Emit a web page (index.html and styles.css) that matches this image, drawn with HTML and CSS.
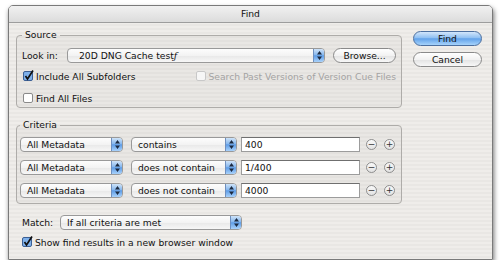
FILE: index.html
```html
<!DOCTYPE html>
<html lang="en">
<head>
    <meta charset="UTF-8">
    <title>Find</title>
    <link rel="stylesheet" href="styles.css">
</head>
<body>

    <div class="window">
        <div class="titlebar">Find</div>

        <div class="dialog">
            <div class="main">

                <fieldset class="group source">
                    <legend>Source</legend>
                    <div class="row">
                        <span class="label lookin-label">Look in:</span>
                        <div class="popup lookin-popup">
                            <span class="popup-value">20D DNG Cache test<i>ƒ</i></span>
                            <span class="popup-arrows">
                                <svg width="9" height="13" viewBox="0 0 9 13"><path d="M2 5.5h5L4.5 2z M2 7.5h5L4.5 11z" fill="#1c2a40"/></svg>
                            </span>
                        </div>
                        <button class="btn browse">Browse...</button>
                    </div>
                    <div class="row check-row">
                        <label class="check">
                            <svg class="box" width="12" height="12" viewBox="0 0 12 12"><rect x="1.5" y="1.5" width="9" height="9" rx="1.5" fill="#7eb0ea" stroke="#3b5f94"/><path d="M3.5 6l2 3L11 0.5" fill="none" stroke="#111" stroke-width="1.7"/></svg>
                            Include All Subfolders
                        </label>
                        <label class="check disabled">
                            <svg class="box" width="12" height="12" viewBox="0 0 12 12"><rect x="1.5" y="1.5" width="9" height="9" rx="1.5" fill="#f6f6f6" stroke="#c8c8c8"/></svg>
                            Search Past Versions of Version Cue Files
                        </label>
                    </div>
                    <div class="row check-row last">
                        <label class="check">
                            <svg class="box" width="12" height="12" viewBox="0 0 12 12"><rect x="1.5" y="1.5" width="9" height="9" rx="1.5" fill="#fff" stroke="#8a8a8a"/></svg>
                            Find All Files
                        </label>
                    </div>
                </fieldset>

                <fieldset class="group criteria">
                    <legend>Criteria</legend>
                    <div class="crit-row">
                        <div class="popup field-popup">
                            <span class="popup-value">All Metadata</span>
                            <span class="popup-arrows"><svg width="9" height="13" viewBox="0 0 9 13"><path d="M2 5.5h5L4.5 2z M2 7.5h5L4.5 11z" fill="#1c2a40"/></svg></span>
                        </div>
                        <div class="popup op-popup">
                            <span class="popup-value">contains</span>
                            <span class="popup-arrows"><svg width="9" height="13" viewBox="0 0 9 13"><path d="M2 5.5h5L4.5 2z M2 7.5h5L4.5 11z" fill="#1c2a40"/></svg></span>
                        </div>
                        <div class="text-field">400</div>
                        <span class="round-btn">&minus;</span>
                        <span class="round-btn">+</span>
                    </div>
                    <div class="crit-row">
                        <div class="popup field-popup">
                            <span class="popup-value">All Metadata</span>
                            <span class="popup-arrows"><svg width="9" height="13" viewBox="0 0 9 13"><path d="M2 5.5h5L4.5 2z M2 7.5h5L4.5 11z" fill="#1c2a40"/></svg></span>
                        </div>
                        <div class="popup op-popup">
                            <span class="popup-value">does not contain</span>
                            <span class="popup-arrows"><svg width="9" height="13" viewBox="0 0 9 13"><path d="M2 5.5h5L4.5 2z M2 7.5h5L4.5 11z" fill="#1c2a40"/></svg></span>
                        </div>
                        <div class="text-field">1/400</div>
                        <span class="round-btn">&minus;</span>
                        <span class="round-btn">+</span>
                    </div>
                    <div class="crit-row">
                        <div class="popup field-popup">
                            <span class="popup-value">All Metadata</span>
                            <span class="popup-arrows"><svg width="9" height="13" viewBox="0 0 9 13"><path d="M2 5.5h5L4.5 2z M2 7.5h5L4.5 11z" fill="#1c2a40"/></svg></span>
                        </div>
                        <div class="popup op-popup">
                            <span class="popup-value">does not contain</span>
                            <span class="popup-arrows"><svg width="9" height="13" viewBox="0 0 9 13"><path d="M2 5.5h5L4.5 2z M2 7.5h5L4.5 11z" fill="#1c2a40"/></svg></span>
                        </div>
                        <div class="text-field">4000</div>
                        <span class="round-btn">&minus;</span>
                        <span class="round-btn">+</span>
                    </div>
                </fieldset>

                <div class="row match">
                    <span class="label match-label">Match:</span>
                    <div class="popup match-popup">
                        <span class="popup-value">If all criteria are met</span>
                        <span class="popup-arrows"><svg width="9" height="13" viewBox="0 0 9 13"><path d="M2 5.5h5L4.5 2z M2 7.5h5L4.5 11z" fill="#1c2a40"/></svg></span>
                    </div>
                </div>
                <div class="row check-row show-row">
                    <label class="check">
                        <svg class="box" width="12" height="12" viewBox="0 0 12 12"><rect x="1.5" y="1.5" width="9" height="9" rx="1.5" fill="#7eb0ea" stroke="#3b5f94"/><path d="M3.5 6l2 3L11 0.5" fill="none" stroke="#111" stroke-width="1.7"/></svg>
                        Show find results in a new browser window
                    </label>
                </div>
            </div>

            <div class="actions">
                <button class="btn default">Find</button>
                <button class="btn">Cancel</button>
            </div>
        </div>
    </div>

</body>
</html>
```

FILE: styles.css
```css
body {
    margin: 0;
    padding: 0;
    background-color: #fff;
    font-family: "DejaVu Sans", sans-serif;
    font-size: 9.2px;
    color: #111;
}
.window {
    box-sizing: border-box;
    width: 485px;
    height: 255px;
    margin: 5px 0 0 8px;
    border: 1px solid #7a7a7a;
    border-radius: 5px 5px 0 0;
    background: repeating-linear-gradient(#efedea 0, #efedea 2px, #e9e7e4 2px, #e9e7e4 4px);
    box-shadow: 1px 3px 5px rgba(0, 0, 0, 0.55);
    overflow: hidden;
}
.titlebar {
    height: 16px;
    line-height: 16px;
    text-align: center;
    background: linear-gradient(#f1f1f1, #dcdcdc);
    border-bottom: 1px solid #9d9d9d;
}
.dialog {
    display: flex;
    padding-left: 7px;
}
.main {
    width: 386px;
    padding-top: 6px;
}
.group {
    margin: 0;
    min-width: 0;
    border: 1px solid #aeaca9;
    border-radius: 4px;
    background-color: rgba(0, 0, 0, 0.025);
}
.group legend {
    padding: 0 3px;
    line-height: 12px;
}
.source {
    padding: 7px 5px 3px 5px;
}
.criteria {
    margin-top: 11px;
    padding: 6px 5px 5px 3px;
}
.row {
    display: flex;
    align-items: center;
}
.label {
    white-space: nowrap;
}
.lookin-label {
    width: 45px;
}
.match-label {
    width: 38px;
}
.popup {
    box-sizing: border-box;
    display: flex;
    height: 15px;
    border: 1px solid #999;
    border-radius: 4px;
    background: linear-gradient(#fdfdfd, #f3f3f3 50%, #e9e9e9 55%, #f7f7f7);
    overflow: hidden;
}
.popup-value {
    flex: 1;
    padding-left: 6px;
    line-height: 13px;
    white-space: nowrap;
}
.popup-value i {
    font-family: "DejaVu Serif", serif;
}
.popup-arrows {
    width: 10px;
    display: flex;
    align-items: center;
    justify-content: center;
    border-left: 1px solid #6e8fbf;
    background: linear-gradient(#cfe3f8, #86b7ee 45%, #5e9ce6 52%, #a9d2fb);
}
.lookin-popup {
    width: 258px;
}
.lookin-popup .popup-value {
    padding-left: 11px;
}
.field-popup {
    width: 103px;
}
.op-popup {
    width: 106px;
    margin-left: 8px;
}
.match-popup {
    width: 182px;
}
.btn {
    box-sizing: border-box;
    height: 15px;
    padding: 0;
    font-family: "DejaVu Sans", sans-serif;
    font-size: 9.2px;
    color: #111;
    border: 1px solid #8a8a8a;
    border-radius: 8px;
    background: linear-gradient(#ffffff, #f2f2f2 50%, #e4e4e4 55%, #f8f8f8);
}
.browse {
    width: 63px;
    margin-left: 8px;
}
.check-row {
    height: 12px;
    margin-top: 7px;
}
.check-row.last {
    margin-top: 10px;
}
.check {
    display: flex;
    align-items: center;
    white-space: nowrap;
}
.check .box {
    margin-right: 2px;
}
.check.disabled {
    margin-left: auto;
    color: #a3a3a3;
}
.crit-row {
    display: flex;
    align-items: center;
    height: 15px;
}
.crit-row + .crit-row {
    margin-top: 8px;
}
.text-field {
    box-sizing: border-box;
    width: 119px;
    height: 15px;
    margin-left: 4px;
    padding-left: 3px;
    line-height: 13px;
    background-color: #fff;
    border: 1px solid #9c9c9c;
    border-top-color: #6f6f6f;
}
.round-btn {
    box-sizing: border-box;
    width: 11px;
    height: 11px;
    margin-left: 6px;
    border: 1px solid #8e8e8e;
    border-radius: 50%;
    background: linear-gradient(#fafafa, #e2e2e2);
    font-size: 9px;
    line-height: 9px;
    text-align: center;
    color: #333;
}
.round-btn + .round-btn {
    margin-left: 7px;
}
.match {
    margin-top: 11px;
    padding-left: 6px;
}
.show-row {
    margin-top: 6px;
    padding-left: 5px;
}
.actions {
    display: flex;
    flex-direction: column;
    width: 69px;
    margin-left: 11px;
    padding-top: 8px;
}
.actions .btn + .btn {
    margin-top: 6px;
}
.btn.default {
    border-color: #4c6f9f;
    background: linear-gradient(#d2e6fb, #8fc0f2 45%, #62a2ea 52%, #a6d3fb);
}
```
